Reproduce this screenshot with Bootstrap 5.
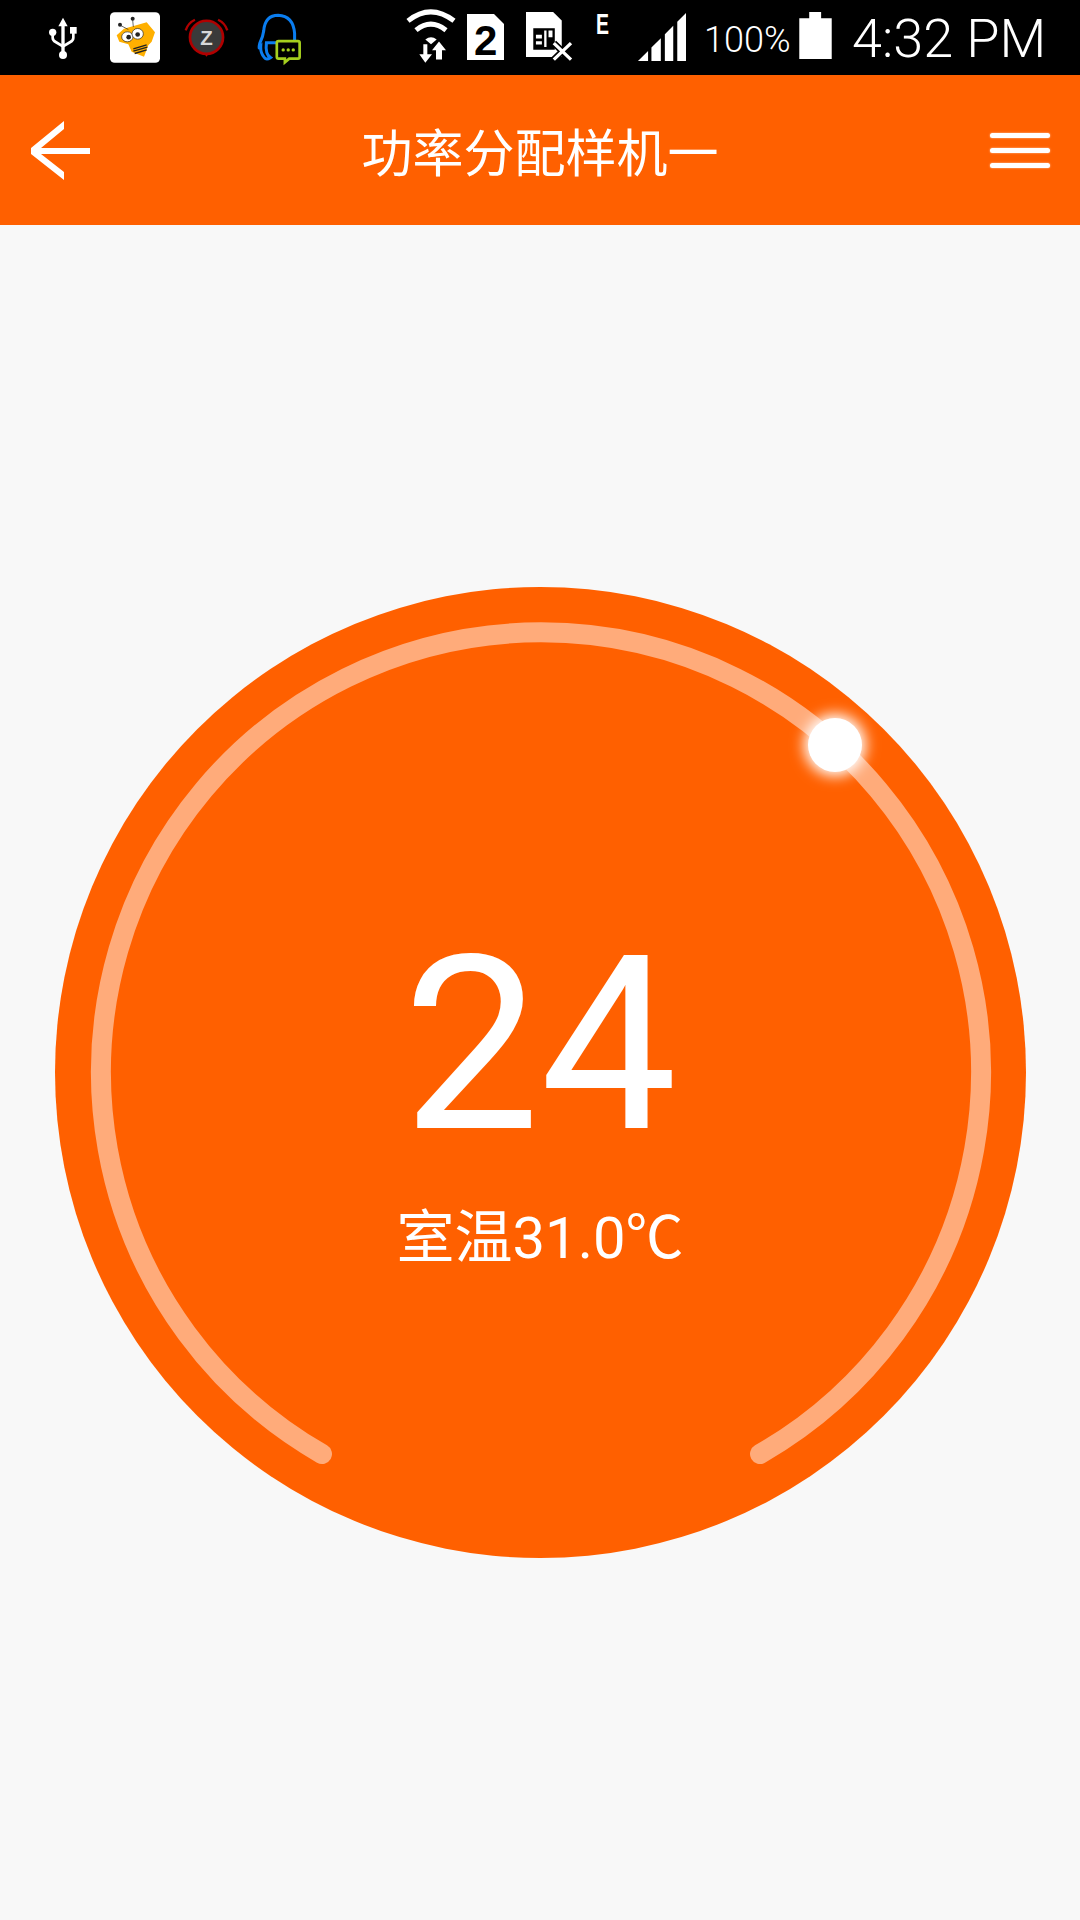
<!DOCTYPE html>
<html lang="en">

<head>
    <meta charset="utf-8" />
    <meta name="viewport" content="width=device-width, initial-scale=1" />
    <title>功率分配样机一</title>

    <link rel="stylesheet" href="https://cdn.jsdelivr.net/npm/bootstrap@5.3.2/dist/css/bootstrap.min.css">
    <style>
        body {
            background-color: #f8f8f8;
            font-family: Roboto, "Noto Sans CJK SC", sans-serif;
        }

        .status-strip {
            height: 75px;
            background-color: #000;
            color: #fff;
        }

        .status-strip svg {
            display: block;
            flex: none;
            overflow: visible;
        }

        .ic-usb { margin: 17px 0 0 49px; }
        .ic-bee { margin: 12px 0 0 33px; }
        .ic-alarm { margin: 19px 0 0 25px; }
        .ic-qq { margin: 14px 0 0 29px; }
        .ic-wifi { margin: 10px 0 0 105px; }
        .ic-sim2 { margin: 14px 0 0 11px; }
        .ic-simx { margin: 12px 0 0 22px; }
        .ic-edge { margin: 13px 0 0 23px; }
        .ic-signal { margin: 13px 0 0 29px; }
        .ic-battery { margin: 12px 0 0 11px; }

        .batt-text {
            margin: 17px 0 0 18px;
            width: 84px;
            font-size: 36px;
            font-weight: 300;
            line-height: 46px;
            white-space: nowrap;
        }

        .clock-text {
            margin: 8px 0 0 20px;
            font-size: 54px;
            font-weight: 300;
            line-height: 62px;
            white-space: nowrap;
        }

        .app-bar {
            height: 150px;
            background-color: #ff6000;
            padding: 0 30px 0 31px;
        }

        .app-title {
            font-family: "Noto Sans CJK SC", sans-serif;
            font-size: 51px;
            font-weight: 400;
            line-height: 60px;
            color: #fff;
        }

        .menu-bars {
            width: 60px;
            gap: 10px;
        }

        .menu-bars span {
            display: block;
            height: 5px;
            background-color: #fff;
            border-radius: 3px;
            box-shadow: 0 0 2px rgba(255, 255, 255, .7);
        }

        .dial-wrap {
            padding-top: 362px;
        }

        .dial {
            width: 971px;
            height: 971px;
            border-radius: 50%;
            background-color: #ff6000;
            color: #fff;
        }

        .dial-art {
            position: absolute;
            top: 0;
            left: 0;
        }

        .dial-temp {
            font-size: 244px;
            line-height: 240px;
            margin-top: 52px;
        }

        .dial-room {
            font-size: 58px;
            line-height: 70px;
            margin-top: 38px;
        }
    </style>
</head>

<body>
    <div class="status-strip d-flex align-items-start">
        <svg class="ic-usb" width="28" height="42" viewBox="148 50 84 126">
            <path d="M190 52 L204 78 H195 V165 H185 V78 H176 Z" fill="#fff" />
            <circle cx="190" cy="164" r="12" fill="#fff" />
            <circle cx="159" cy="96" r="11" fill="#fff" />
            <rect x="211" y="80" width="20" height="20" fill="#fff" />
            <path d="M159 96 V112 Q159 120 168 125 L190 138 L212 125 Q221 120 221 112 V98" fill="none" stroke="#fff" stroke-width="8" />
        </svg>
        <svg class="ic-bee" width="50" height="51" viewBox="330 36 150 152">
            <rect x="330" y="36" width="150" height="152" rx="14" fill="#fff" />
            <path d="M372 86 L440 66 L465 96 L455 125 L445 135 L432 170 L395 155 L385 132 L358 125 L350 105 Z" fill="#ffb000" />
            <circle cx="360" cy="74" r="6" fill="#222" />
            <circle cx="398" cy="56" r="6" fill="#222" />
            <path d="M362 76 L385 88 M398 60 L400 80" stroke="#222" stroke-width="2" />
            <ellipse cx="382" cy="110" rx="17" ry="15" fill="#fff" stroke="#222" stroke-width="2" />
            <ellipse cx="413" cy="101" rx="17" ry="16" fill="#fff" stroke="#222" stroke-width="2" />
            <circle cx="386" cy="111" r="7" fill="#222" />
            <circle cx="413" cy="103" r="7" fill="#222" />
            <path d="M400 146 L440 134 M400 153 L442 141 M404 160 L440 149" stroke="#222" stroke-width="4" />
        </svg>
        <svg class="ic-alarm" width="44" height="38" viewBox="555 58 133 114">
            <path d="M557 92 Q564 70 585 60 M683 92 Q676 70 655 60" fill="none" stroke="#b00000" stroke-width="7" />
            <path d="M612 160 L620 172 L628 160 Z" fill="#c00000" />
            <circle cx="620" cy="113" r="50" fill="#3a3a3a" stroke="#b00000" stroke-width="8" />
            <text x="620" y="135" text-anchor="middle" font-family="Liberation Sans" font-weight="700" font-size="62" fill="#d8d8d8">Z</text>
        </svg>
        <svg class="ic-qq" width="43" height="49" viewBox="775 42 128 146">
            <path d="M830 128 H800 Q796 162 812 172 Q800 180 794 172 Q782 158 783 140 Q775 150 780 130 Q790 110 792 92 Q796 46 835 46 Q880 48 884 100 V120" fill="none" stroke="#0a7df0" stroke-width="9" />
            <path d="M836 123 H894 Q899 123 899 128 V170 Q899 175 894 175 H868 L855 186 V175 H836 Q831 175 831 170 V128 Q831 123 836 123 Z" fill="#000" stroke="#a5cf1e" stroke-width="8" />
            <circle cx="850" cy="149" r="5" fill="#a5cf1e" />
            <circle cx="865" cy="149" r="5" fill="#a5cf1e" />
            <circle cx="880" cy="149" r="5" fill="#a5cf1e" />
        </svg>
        <svg class="ic-wifi" width="50" height="53" viewBox="48 30 150 158">
            <path d="M54 62 Q122 8 192 62" fill="none" stroke="#fff" stroke-width="15" />
            <path d="M78 90 Q122 54 168 90" fill="none" stroke="#fff" stroke-width="15" />
            <path d="M106 118 Q123 104 140 118 L123 132 Z" fill="#fff" />
            <path d="M100 132 H112 V162 H126 L106 188 L88 162 H100 Z" fill="#fff" />
            <path d="M147 124 L168 150 H156 V178 H138 V150 H126 Z" fill="#fff" />
        </svg>
        <svg class="ic-sim2" width="37" height="46" viewBox="231 42 111 138">
            <path d="M231 42 H312 L342 72 V180 H231 Z" fill="#fff" />
            <text x="287" y="165" text-anchor="middle" font-family="Liberation Sans" font-weight="700" font-size="126" fill="#000">2</text>
        </svg>
        <svg class="ic-simx" width="47" height="49" viewBox="408 36 142 148">
            <path d="M408 36 H490 L516 62 V172 H408 Z" fill="#fff" />
            <path d="M430 85 H495 V150 H430 Z" fill="#000" />
            <path d="M438 105 H456 V116 H438 Z M438 124 H456 V134 H438 Z M476 92 H488 V112 H476 Z M463 92 H470 V142 H463 Z" fill="#fff" />
            <path d="M492 130 L544 180 M544 130 L492 180" stroke="#000" stroke-width="20" />
            <path d="M492 130 L544 180 M544 130 L492 180" stroke="#fff" stroke-width="10" />
        </svg>
        <svg class="ic-edge" width="13" height="21" viewBox="0 0 13 21">
            <text x="0" y="21" font-family="Liberation Sans" font-weight="700" font-size="29" textLength="13" lengthAdjust="spacingAndGlyphs" fill="#fff">E</text>
        </svg>
        <svg class="ic-signal" width="48" height="48" viewBox="745 40 143 143">
            <path d="M745 183 L775 153 V183 Z M785 183 V143 L813 115 V183 Z M825 183 V103 L850 78 V183 Z M862 183 V66 L888 40 V183 Z" fill="#fff" />
        </svg>
        <div class="batt-text">100%</div>
        <svg class="ic-battery" width="33" height="47" viewBox="58 36 98 142">
            <path d="M88 36 H124 V55 H156 V178 H58 V55 H88 Z" fill="#fff" />
        </svg>
        <div class="clock-text">4:32 PM</div>
    </div>

    <nav class="app-bar d-flex align-items-center justify-content-between">
        <svg width="59" height="59" viewBox="31 120 59 59">
            <path d="M64 120 V128 L41 147 H90 V153 H41 L64 171 V179 L31 153 V147 Z" fill="#fff" />
        </svg>
        <div class="app-title">功率分配样机一</div>
        <div class="menu-bars d-flex flex-column">
            <span></span>
            <span></span>
            <span></span>
        </div>
    </nav>

    <div class="dial-wrap d-flex justify-content-center">
        <div class="dial position-relative d-flex flex-column align-items-center justify-content-center">
            <svg class="dial-art" width="971" height="971" viewBox="0 0 971 971">
                <defs>
                    <filter id="knobGlow" x="-50%" y="-50%" width="200%" height="200%">
                        <feGaussianBlur stdDeviation="7" />
                    </filter>
                </defs>
                <path d="M267 867 A440 440 0 1 1 705 867" fill="none" stroke="#ffab7a" stroke-width="20" stroke-linecap="round" />
                <circle cx="780" cy="158" r="31" fill="#fff" filter="url(#knobGlow)" />
                <circle cx="780" cy="158" r="27" fill="#fff" />
            </svg>
            <div class="dial-temp position-relative">24</div>
            <div class="dial-room position-relative">室温31.0℃</div>
        </div>
    </div>
</body>

</html>
